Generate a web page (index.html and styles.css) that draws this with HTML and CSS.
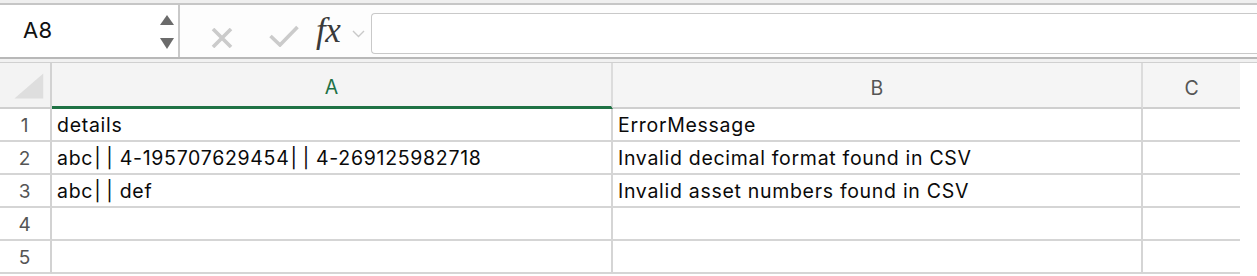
FILE: index.html
```html
<!DOCTYPE html>
<html>
<head>
<meta charset="utf-8">
<link rel="stylesheet" href="styles.css">
</head>
<body>
<div class="top-strip"></div>
<div class="toolbar">
  <div class="namebox">
    <span class="name">A8</span>
    <div class="spinner">
      <svg width="14" height="34" viewBox="0 0 14 34"><path d="M7 0 L14 10 L0 10 Z" fill="#6b6b6b"/><path d="M0 23 L14 23 L7 34 Z" fill="#6b6b6b"/></svg>
    </div>
  </div>
  <div class="formula-area">
    <svg class="ico-x" width="24" height="20" viewBox="0 0 24 20"><path d="M3 1 L21 19 M21 1 L3 19" stroke="#cbcbcb" stroke-width="3.6" fill="none"/></svg>
    <svg class="ico-check" width="30" height="22" viewBox="0 0 30 22"><path d="M1.5 11 L11 20 L28.5 2" stroke="#cbcbcb" stroke-width="3.6" fill="none"/></svg>
    <span class="fx">fx</span>
    <svg class="ico-chev" width="13" height="8" viewBox="0 0 13 8"><path d="M1 1 L6.5 6.5 L12 1" stroke="#c9c9c9" stroke-width="1.4" fill="none"/></svg>
    <div class="formula-input"></div>
  </div>
</div>
<div class="gap-strip"></div>
<div class="sheet">
  <div class="hcell corner"><svg width="52" height="45" viewBox="0 0 52 45"><path d="M15 36 L45 36 L45 10 Z" fill="#dedede"/></svg></div>
  <div class="hcell col active">A</div>
  <div class="hcell col">B</div>
  <div class="hcell col last">C</div>

  <div class="cell rn">1</div><div class="cell">details</div><div class="cell">ErrorMessage</div><div class="cell last"></div>
  <div class="cell rn">2</div><div class="cell">abc<span class="pipes">|<span class="p2">|</span></span> 4-195707629454<span class="pipes">|<span class="p2">|</span></span> 4-269125982718</div><div class="cell">Invalid decimal format found in CSV</div><div class="cell last"></div>
  <div class="cell rn">3</div><div class="cell">abc<span class="pipes">|<span class="p2">|</span></span> def</div><div class="cell">Invalid asset numbers found in CSV</div><div class="cell last"></div>
  <div class="cell rn">4</div><div class="cell"></div><div class="cell"></div><div class="cell last"></div>
  <div class="cell rn">5</div><div class="cell"></div><div class="cell"></div><div class="cell last"></div>
</div>
</body>
</html>
```
FILE: styles.css
```css
* { box-sizing: border-box; }
html, body { margin: 0; padding: 0; background: #ffffff; }
body { width: 1257px; height: 276px; overflow: hidden; font-family: Inter, "Liberation Sans", sans-serif; color: #1a1a1a; }

.top-strip { height: 5px; background: #efefef; border-bottom: 2px solid #c6c6c6; }

.toolbar { display: flex; height: 54px; background: #fdfdfd; border-bottom: 2px solid #b8b8b8; }
.namebox { width: 180px; display: flex; align-items: center; justify-content: space-between; padding: 0 4px 0 23px; border-right: 2px solid #c9c9c9; background: #ffffff; }
.name { font-size: 22px; color: #111; letter-spacing: 0.3px; margin-top: -2px; }
.spinner { display: flex; padding-top: 1px; }
.formula-area { flex: 1; display: flex; align-items: center; padding-left: 30px; }
.ico-x { margin-top: 13px; }
.ico-check { margin-left: 35px; margin-top: 10px; }
.fx { font-family: "Liberation Serif", serif; font-style: italic; font-size: 35px; color: #3a3a3a; margin-left: 17px; margin-top: 0px; letter-spacing: -0.5px; }
.ico-chev { margin-left: 12px; margin-top: 5px; }
.formula-input { flex: 1; height: 41px; margin-left: 6px; margin-top: 4px; border: 1px solid #c9c9c9; border-right: none; border-radius: 4px 0 0 4px; background: #ffffff; }

.gap-strip { height: 4px; background: #f1f1f1; border-bottom: 1px solid #d0d0d0; }

.sheet { display: grid; grid-template-columns: 52px 561px 530px 97px; width: 1240px; }
.hcell { height: 46px; background: #f5f5f5; border-right: 2px solid #dcdcdc; border-bottom: 2px solid #cfcfcf; display: flex; align-items: center; justify-content: center; padding-top: 5px; font-size: 19.5px; color: #555; }
.hcell.corner { padding: 0; background: #f3f3f3; border-right: 2px solid #d2d2d2; }
.hcell.corner svg { display: block; }
.hcell.active { color: #1e7145; border-bottom: 3px solid #1f7244; background: #f4f4f4; }
.hcell.last { border-right: none; }

.cell { height: 33px; border-right: 2px solid #d5d5d5; border-bottom: 2px solid #d5d5d5; display: flex; align-items: center; padding: 1px 0 0 5px; font-size: 19.5px; letter-spacing: 0.7px; color: #0a0a0a; white-space: pre; }
.pipes { margin-left: 1px; }
.p2 { margin-left: 5px; }
.cell.rn { justify-content: center; padding-left: 0; color: #555; font-size: 19px; border-right-color: #d2d2d2; }
.cell.last { border-right: none; }
```
